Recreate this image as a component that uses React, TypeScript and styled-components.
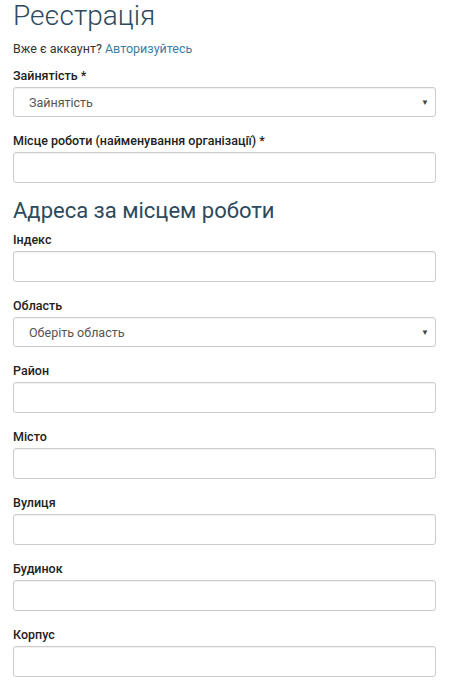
import styled, { createGlobalStyle } from "styled-components";

const GlobalStyle = createGlobalStyle`
  body {
    margin: 0;
    background: #fff;
    font-family: Roboto, "Liberation Sans", sans-serif;
    color: #333;
  }
`;

type Field = {
  label: string;
  required?: boolean;
  select?: string;
};

const workFields: Field[] = [
  { label: "Зайнятість", required: true, select: "Зайнятість" },
  { label: "Місце роботи (найменування організації)", required: true },
];

const addressFields: Field[] = [
  { label: "Індекс" },
  { label: "Область", select: "Оберіть область" },
  { label: "Район" },
  { label: "Місто" },
  { label: "Вулиця" },
  { label: "Будинок" },
  { label: "Корпус" },
];

function FormField({ field }: { field: Field }) {
  return (
    <Group>
      <Label>
        {field.label}
        {field.required && " *"}
      </Label>
      {field.select ? (
        <SelectBox>
          <span>{field.select}</span>
          <Arrow>▼</Arrow>
        </SelectBox>
      ) : (
        <Input type="text" />
      )}
    </Group>
  );
}

export default function App() {
  return (
    <Page>
      <GlobalStyle />
      <Title>Реєстрація</Title>
      <Hint>
        Вже є аккаунт? <a href="#">Авторизуйтесь</a>
      </Hint>
      {workFields.map((f) => (
        <FormField key={f.label} field={f} />
      ))}
      <Subtitle>Адреса за місцем роботи</Subtitle>
      {addressFields.map((f) => (
        <FormField key={f.label} field={f} />
      ))}
    </Page>
  );
}

const Page = styled.div`
  padding: 2px 13px 0;
  width: 423px;
`;

const Title = styled.h1`
  font-size: 28px;
  font-weight: 300;
  line-height: 27px;
  color: #2d4a5d;
  margin: 0 0 11px;
`;

const Hint = styled.p`
  font-size: 12.5px;
  line-height: 17px;
  margin: 0 0 10px;

  a {
    color: #3b7ea6;
    text-decoration: none;
  }
`;

const Subtitle = styled.h2`
  font-size: 22px;
  font-weight: 400;
  line-height: 26px;
  color: #2d4a5d;
  margin: 3px 0 7px;
`;

const Group = styled.div`
  display: flex;
  flex-direction: column;
  margin-bottom: 15px;
`;

const Label = styled.label`
  font-size: 12.5px;
  line-height: 17px;
  font-weight: 500;
  color: #222;
  margin-bottom: 3px;
`;

const Input = styled.input`
  box-sizing: border-box;
  height: 31px;
  width: 100%;
  border: 1px solid #ccc;
  border-radius: 3px;
  box-shadow: inset 0 1px 1px rgba(0, 0, 0, 0.06);
  background: #fff;
`;

const SelectBox = styled.div`
  box-sizing: border-box;
  height: 30px;
  display: flex;
  align-items: center;
  justify-content: space-between;
  padding: 0 6px 0 15px;
  border: 1px solid #ccc;
  border-radius: 3px;
  box-shadow: inset 0 1px 1px rgba(0, 0, 0, 0.06);
  font-size: 12.5px;
  color: #555;
`;

const Arrow = styled.span`
  font-size: 8px;
  color: #444;
`;
